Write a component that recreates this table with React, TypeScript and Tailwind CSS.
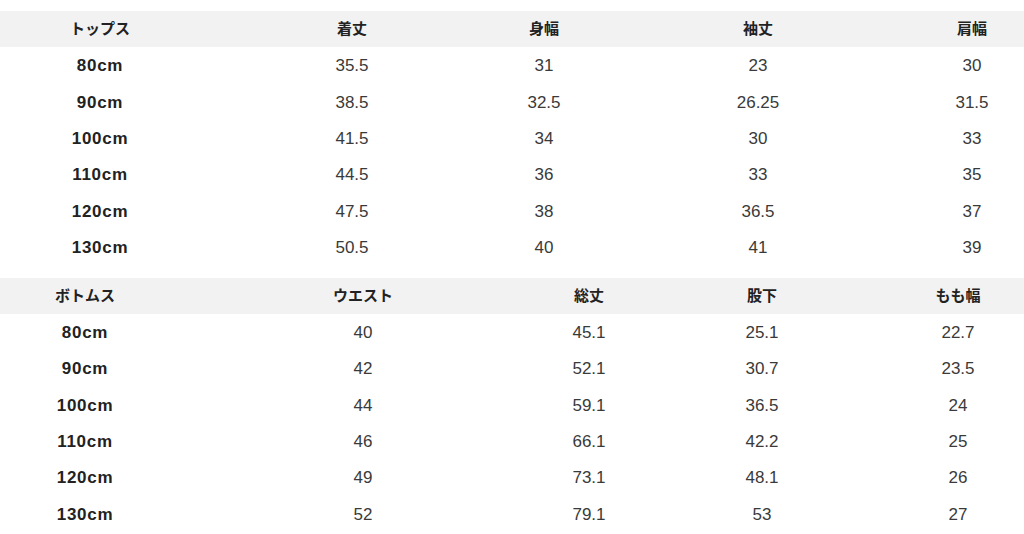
import { ReactElement } from "react";

type Table = {
  cols: string;
  head: string[];
  rows: string[][];
};

const tops: Table = {
  cols: "grid-cols-[200px_304px_80px_348px_80px]",
  head: ["トップス", "着丈", "身幅", "袖丈", "肩幅"],
  rows: [
    ["80cm", "35.5", "31", "23", "30"],
    ["90cm", "38.5", "32.5", "26.25", "31.5"],
    ["100cm", "41.5", "34", "30", "33"],
    ["110cm", "44.5", "36", "33", "35"],
    ["120cm", "47.5", "38", "36.5", "37"],
    ["130cm", "50.5", "40", "41", "39"],
  ],
};

const bottoms: Table = {
  cols: "grid-cols-[170px_386px_66px_280px_112px]",
  head: ["ボトムス", "ウエスト", "総丈", "股下", "もも幅"],
  rows: [
    ["80cm", "40", "45.1", "25.1", "22.7"],
    ["90cm", "42", "52.1", "30.7", "23.5"],
    ["100cm", "44", "59.1", "36.5", "24"],
    ["110cm", "46", "66.1", "42.2", "25"],
    ["120cm", "49", "73.1", "48.1", "26"],
    ["130cm", "52", "79.1", "53", "27"],
  ],
};

const SizeTable = ({ table }: { table: Table }): ReactElement => (
  <div>
    <div className={`grid ${table.cols} h-[36px] items-center bg-[#f2f2f2]`}>
      {table.head.map((h) => (
        <div key={h} className="text-center text-[15px] font-bold text-[#222]">
          {h}
        </div>
      ))}
    </div>
    {table.rows.map((row) => (
      <div key={row[0]} className={`grid ${table.cols} h-[36.3px] items-center pt-[2px]`}>
        {row.map((cell, i) => (
          <div
            key={i}
            className={
              i === 0
                ? "text-center text-[17px] font-bold tracking-[0.7px] text-[#222]"
                : "text-center text-[17px] text-[#3a3a3a]"
            }
          >
            {cell}
          </div>
        ))}
      </div>
    ))}
  </div>
);

export default function App(): ReactElement {
  return (
    <div
      className="w-[1024px] h-[534px] bg-white pt-[11px] flex flex-col gap-[13px] overflow-hidden"
      style={{ fontFamily: '"Liberation Sans", "Noto Sans CJK JP", sans-serif' }}
    >
      <SizeTable table={tops} />
      <SizeTable table={bottoms} />
    </div>
  );
}
